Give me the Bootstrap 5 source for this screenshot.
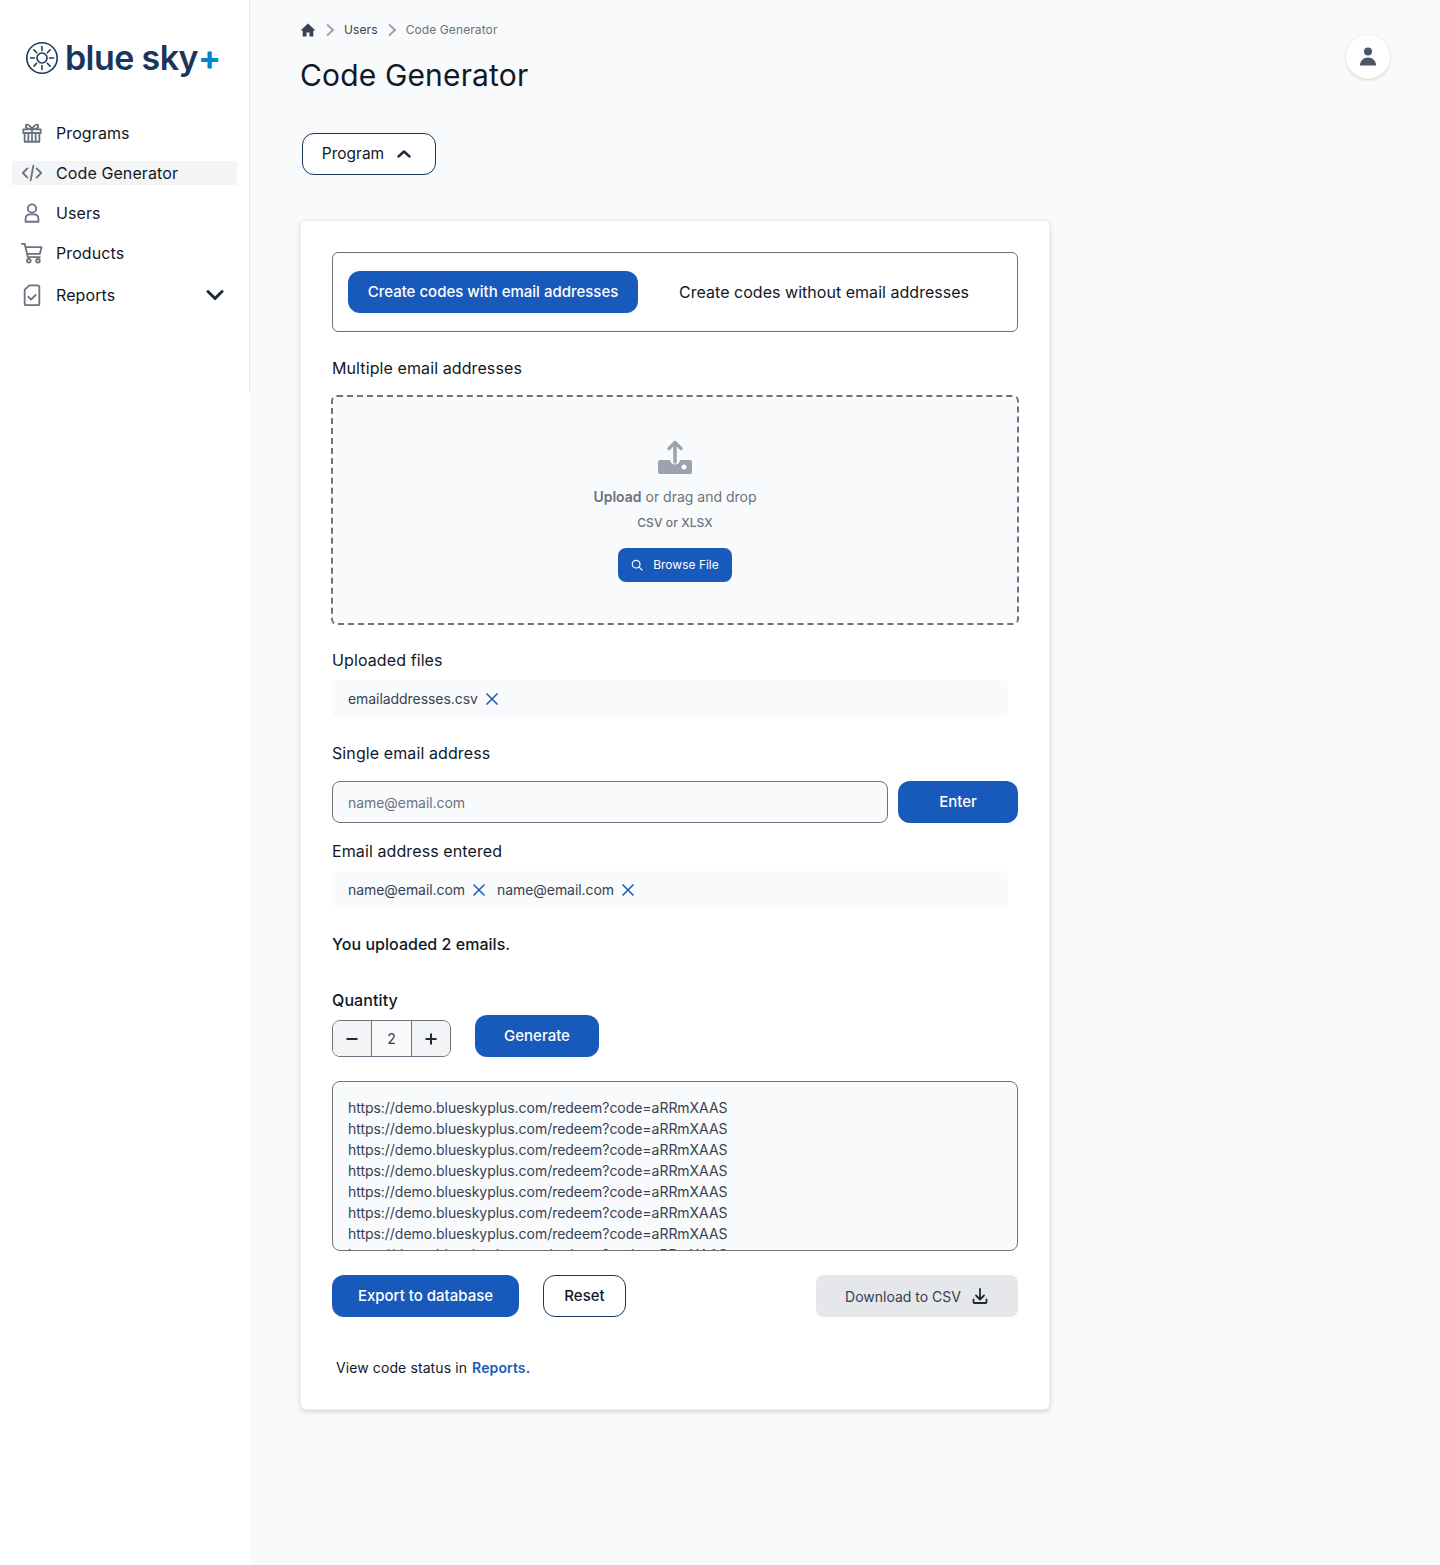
<!DOCTYPE html>
<html lang="en">
<head>
    <meta charset="UTF-8">
    <meta name="viewport" content="width=device-width, initial-scale=1.0">
    <title>Code Generator</title>
    <link href="https://cdn.jsdelivr.net/npm/bootstrap@5.3.0/dist/css/bootstrap.min.css" rel="stylesheet">
    <style>
        body { font-family: Inter, "Liberation Sans", sans-serif; background: #f9fafb; color: #111827; min-height: 1565px; letter-spacing: .1px; }
        .side-panel { width: 250px; flex: none; background: #fff; min-height: 1565px; padding: 0 13px 0 12px; position: relative; }
        .side-rule { position: absolute; top: 0; right: 0; width: 1px; height: 392px; background: #e5e7eb; }
        .brand { height: 121px; padding: 40px 0 0 13px; }
        .brand-logo { margin: 1px 7px 0 0; flex: none; }
        .brand-name { font-weight: 600; font-size: 34px; line-height: 36px; color: #1a365d; letter-spacing: -.6px; white-space: nowrap; margin-left: -1px; }
        .brand-name b { color: #0284d4; font-weight: 700; }
        .side-link { height: 24px; margin-bottom: 16px; color: #111827; font-size: 16px; text-decoration: none; padding-left: 9px; }
        .side-link.current { background: #f3f4f6; }
        .side-link svg.ico { width: 22px; height: 22px; margin-right: 13px; flex: none; }
        .side-link.last { margin-top: 18px; }
        .main-area { padding: 20px 50px 0 50px; flex: 1; }
        .crumbs { font-size: 12px; line-height: 20px; color: #374151; }
        .crumbs .here { color: #6b7280; }
        .crumb-sep { margin: 0 9px; }
        .page-title { font-size: 30px; line-height: 36px; font-weight: 400; margin: 17px 0 0; letter-spacing: .15px; }
        .avatar-btn { width: 44px; height: 44px; border-radius: 50%; background: #fff; box-shadow: 0 1px 3px rgba(0,0,0,.18); margin-top: 15px; }
        .btn-program { width: 134px; height: 42px; border: 1px solid #1a365d; border-radius: 12px; background: #fff; font-size: 15.5px; color: #111827; margin: 40px 0 45px 2px; padding: 0 5px 0 0; gap: 13px; }
        .form-card { width: 750px; height: 1190px; border: 1px solid #eceef1; border-radius: 6px; background: #fff; padding: 31px; box-shadow: 0 2px 5px rgba(0,0,0,.15); }
        .mode-switch { height: 80px; border: 1px solid #6b7280; border-radius: 6px; padding: 0 15px; }
        .btn-blue { background: #185abc; color: #fff; border: 0; border-radius: 12px; height: 42px; font-size: 15px; font-weight: 500; padding: 0; }
        .btn-blue:hover { background: #185abc; color: #fff; }
        .mode-off { font-size: 16px; margin-left: 41px; color: #111827; letter-spacing: .03px; }
        .field-label { font-size: 16px; line-height: 24px; margin: 0; }
        .summary-text { letter-spacing: .03px; }
        .drop-zone { width: 688px; height: 230px; background: #f9fafb; border: 2px dashed #6b7280; border-radius: 6px; margin: 15px 0 0 -1px; padding-top: 43px; }
        .drop-title { font-size: 14px; color: #6b7280; line-height: 20px; margin-top: 13px; letter-spacing: 0; }
        .drop-hint { font-size: 12px; font-weight: 500; color: #6b7280; line-height: 16px; margin-top: 8px; }
        .btn-browse { width: 114px; height: 34px; border-radius: 8px; font-size: 12px; margin-top: 17px; gap: 10px; }
        .tag-box { width: 676px; height: 37px; background: #f9fafb; border-radius: 6px; padding: 0 16px; font-size: 14px; color: #374151; margin-top: 8px; letter-spacing: -.06px; }
        .tag-box svg { width: 14px; height: 14px; margin-left: 7px; }
        .tag-next { margin-left: 11px; }
        .mail-input { width: 556px; height: 42px; background: #f9fafb; border: 1px solid #6b7280; border-radius: 8px; padding: 0 15px; font-size: 14px; color: #6b7280; letter-spacing: -.06px; }
        .mail-input::placeholder { color: #6b7280; }
        .stepper { width: 119px; height: 37px; border: 1px solid #6b7280; border-radius: 8px; overflow: hidden; margin-top: 8px; }
        .stepper > div { flex: 1; }
        .stepper .step-btn { background: #f3f4f6; }
        .stepper .step-val { background: #f9fafb; border-left: 1px solid #6b7280; border-right: 1px solid #6b7280; font-size: 14px; color: #374151; }
        .code-box { height: 170px; background: #f9fafb; border: 1px solid #6b7280; border-radius: 8px; padding: 15px 15px 0; font-size: 14px; line-height: 21px; color: #374151; overflow: hidden; margin-top: 24px; letter-spacing: -.04px; }
        .btn-reset { width: 83px; height: 42px; border: 1px solid #1a365d; border-radius: 12px; background: #fff; font-size: 15px; font-weight: 500; color: #111827; }
        .btn-csv { width: 202px; height: 42px; border: 0; border-radius: 8px; background: #e5e7eb; font-size: 14px; color: #374151; gap: 10px; }
        .status-line { font-size: 14px; margin: 41px 0 0 4px; line-height: 20px; }
        .status-line a { color: #185abc; font-weight: 600; text-decoration: none; margin-left: 1px; }
    </style>
</head>
<body>
<div class="d-flex">
    <!-- sidebar -->
    <nav class="side-panel">
        <div class="side-rule"></div>
        <div class="brand d-flex align-items-start">
            <svg class="brand-logo" width="34" height="34" viewBox="0 0 34 34" fill="none" stroke="#1a365d">
                <circle cx="17" cy="17" r="15.2" stroke-width="1.6"/>
                <circle cx="17" cy="17" r="5" stroke-width="1.6"/>
                <path d="M17 5.500v4M17 24.500v4M5.500 17h4M24.500 17h4M8.900 8.900l2.800 2.800M22.300 22.300l2.800 2.800M25.100 8.900l-2.800 2.800M11.700 22.300l-2.800 2.800" stroke-width="1.500" stroke-linecap="round"/>
            </svg>
            <span class="brand-name">blue sky<b>+</b></span>
        </div>
        <a href="#" class="side-link d-flex align-items-center">
            <svg class="ico" viewBox="0 0 24 24" fill="none" stroke="#6b7280" stroke-width="2" stroke-linejoin="round"><path d="M2.500 8h19v4h-19zM4 12v9.500h16V12M12 8v13.500M8 12v9.500M16 12v9.500M12 8C10 3 6 1.800 5.200 4 4.500 6.300 8 8 12 8ZM12 8c2-5 6-6.200 6.800-4 .7 2.300-2.800 4-6.800 4Z"/></svg>
            Programs
        </a>
        <a href="#" class="side-link current d-flex align-items-center">
            <svg class="ico" viewBox="0 0 24 24" fill="none" stroke="#6b7280" stroke-width="2" stroke-linecap="round" stroke-linejoin="round"><path d="M7 7l-5 5 5 5M17 7l5 5-5 5M13.500 4l-3 16"/></svg>
            Code Generator
        </a>
        <a href="#" class="side-link d-flex align-items-center">
            <svg class="ico" viewBox="0 0 24 24" fill="none" stroke="#6b7280" stroke-width="2" stroke-linejoin="round"><circle cx="12" cy="7" r="4.500"/><path d="M5 21.500v-3c0-3 2-5 5-5h4c3 0 5 2 5 5v3Z"/></svg>
            Users
        </a>
        <a href="#" class="side-link d-flex align-items-center">
            <svg class="ico" viewBox="0 0 24 24" fill="none" stroke="#6b7280" stroke-width="2" stroke-linecap="round" stroke-linejoin="round"><path d="M1 2h3l3.500 14.500h13M5 5.500h17.500l-2 7.500H7"/><circle cx="8.500" cy="20.500" r="2"/><circle cx="18.500" cy="20.500" r="2"/></svg>
            Products
        </a>
        <a href="#" class="side-link last d-flex align-items-center">
            <svg class="ico" viewBox="0 0 24 24" fill="none" stroke="#6b7280" stroke-width="2" stroke-linecap="round" stroke-linejoin="round"><path d="M9 1.500h9a2 2 0 0 1 2 2V22a1 1 0 0 1-1 1H5a1 1 0 0 1-1-1V6.500ZM8 14l3 3 5-5"/></svg>
            Reports
            <svg class="ms-auto" style="margin-right:13px" width="18" height="12" viewBox="0 0 18 12" fill="none" stroke="#1f2937" stroke-width="3" stroke-linecap="round" stroke-linejoin="round"><path d="M2 2.500l7 7 7-7"/></svg>
        </a>
    </nav>

    <main class="main-area">
        <div class="d-flex justify-content-between">
            <div>
                <div class="crumbs d-flex align-items-center">
                    <svg width="16" height="16" viewBox="0 0 16 16" fill="#374151"><path d="M8 1.500 .5 8.500h2.200V14.500h3.800v-4h3v4h3.800V8.500h2.200Z"/></svg>
                    <svg class="crumb-sep" width="10" height="14" viewBox="0 0 10 14" fill="none" stroke="#9ca3af" stroke-width="2"><path d="M2 1.500 8 7l-6 5.500"/></svg>
                    <span>Users</span>
                    <svg class="crumb-sep" width="10" height="14" viewBox="0 0 10 14" fill="none" stroke="#9ca3af" stroke-width="2"><path d="M2 1.500 8 7l-6 5.500"/></svg>
                    <span class="here">Code Generator</span>
                </div>
                <h1 class="page-title">Code Generator</h1>
            </div>
            <div class="avatar-btn d-flex align-items-center justify-content-center">
                <svg width="18" height="20" viewBox="0 0 18 20" fill="#4b5563"><circle cx="9" cy="4.500" r="4"/><path d="M1 18.500c0-5 3.500-8 8-8s8 3 8 8Z"/></svg>
            </div>
        </div>

        <button class="btn-program d-flex align-items-center justify-content-center" type="button">
            Program
            <svg width="14" height="10" viewBox="0 0 14 10" fill="none" stroke="#1f2937" stroke-width="2.400" stroke-linecap="round" stroke-linejoin="round"><path d="M1.500 7.500 7 2.500l5.500 5"/></svg>
        </button>

        <div class="card form-card">
            <div class="mode-switch d-flex align-items-center">
                <button class="btn-blue" style="width:290px" type="button">Create codes with email addresses</button>
                <span class="mode-off">Create codes without email addresses</span>
            </div>

            <p class="field-label" style="margin-top:24px">Multiple email addresses</p>
            <div class="drop-zone d-flex flex-column align-items-center">
                <svg width="34" height="34" viewBox="0 0 34 34" fill="#9ca3af"><path d="M2 20h10v0a5 4.500 0 0 0 10 0v0h10a2 2 0 0 1 2 2v10a2 2 0 0 1-2 2H2a2 2 0 0 1-2-2V22a2 2 0 0 1 2-2Z"/><circle cx="26" cy="27" r="2.500" fill="#f9fafb"/><path d="M17 3v19" fill="none" stroke="#9ca3af" stroke-width="3.500" stroke-linecap="round"/><path d="M11 8.500 17 2.500 23 8.500" fill="none" stroke="#9ca3af" stroke-width="3.200" stroke-linecap="round" stroke-linejoin="round"/></svg>
                <div class="drop-title"><span class="fw-semibold">Upload</span> or drag and drop</div>
                <div class="drop-hint">CSV or XLSX</div>
                <button class="btn-blue btn-browse d-flex align-items-center justify-content-center" type="button">
                    <svg width="12" height="12" viewBox="0 0 14 14" fill="none" stroke="#fff" stroke-width="1.400" stroke-linecap="round"><circle cx="6" cy="6" r="4.500"/><path d="M9.500 9.500 13 13"/></svg>
                    <span class="fw-normal">Browse File</span>
                </button>
            </div>

            <p class="field-label" style="margin-top:23px">Uploaded files</p>
            <div class="tag-box d-flex align-items-center">
                emailaddresses.csv
                <svg viewBox="0 0 14 14" fill="none" stroke="#185abc" stroke-width="1.500"><path d="M1.500 1.500l11 11M12.500 1.500l-11 11"/></svg>
            </div>

            <p class="field-label" style="margin-top:24px">Single email address</p>
            <div class="d-flex gap-2" style="margin-top:16px">
                <input class="mail-input" type="text" placeholder="name@email.com">
                <button class="btn-blue ms-auto" style="width:120px" type="button">Enter</button>
            </div>

            <p class="field-label" style="margin-top:16px">Email address entered</p>
            <div class="tag-box d-flex align-items-center">
                name@email.com
                <svg viewBox="0 0 14 14" fill="none" stroke="#185abc" stroke-width="1.500"><path d="M1.500 1.500l11 11M12.500 1.500l-11 11"/></svg>
                <span class="tag-next">name@email.com</span>
                <svg viewBox="0 0 14 14" fill="none" stroke="#185abc" stroke-width="1.500"><path d="M1.500 1.500l11 11M12.500 1.500l-11 11"/></svg>
            </div>

            <p class="field-label fw-medium summary-text" style="margin-top:24px">You uploaded 2 emails.</p>

            <div class="d-flex align-items-end" style="margin-top:32px">
                <div>
                    <p class="field-label fw-medium">Quantity</p>
                    <div class="stepper d-flex">
                        <div class="step-btn d-flex align-items-center justify-content-center">
                            <svg width="14" height="14" viewBox="0 0 14 14" stroke="#1f2937" stroke-width="2"><path d="M1.500 7h11"/></svg>
                        </div>
                        <div class="step-val d-flex align-items-center justify-content-center">2</div>
                        <div class="step-btn d-flex align-items-center justify-content-center">
                            <svg width="14" height="14" viewBox="0 0 14 14" stroke="#1f2937" stroke-width="2"><path d="M1.500 7h11M7 1.500v11"/></svg>
                        </div>
                    </div>
                </div>
                <button class="btn-blue" style="width:124px;margin-left:24px" type="button">Generate</button>
            </div>

            <div class="code-box">
                https://demo.blueskyplus.com/redeem?code=aRRmXAAS<br>
                https://demo.blueskyplus.com/redeem?code=aRRmXAAS<br>
                https://demo.blueskyplus.com/redeem?code=aRRmXAAS<br>
                https://demo.blueskyplus.com/redeem?code=aRRmXAAS<br>
                https://demo.blueskyplus.com/redeem?code=aRRmXAAS<br>
                https://demo.blueskyplus.com/redeem?code=aRRmXAAS<br>
                https://demo.blueskyplus.com/redeem?code=aRRmXAAS<br>
                https://demo.blueskyplus.com/redeem?code=aRRmXAAS
            </div>

            <div class="d-flex align-items-center" style="margin-top:24px">
                <button class="btn-blue" style="width:187px" type="button">Export to database</button>
                <button class="btn-reset" style="margin-left:24px" type="button">Reset</button>
                <button class="btn-csv ms-auto d-flex align-items-center justify-content-center" type="button">
                    Download to CSV
                    <svg width="18" height="18" viewBox="0 0 18 18" fill="none" stroke="#1f2937" stroke-width="1.800" stroke-linecap="round" stroke-linejoin="round"><path d="M9 2v10M5 8.500l4 4 4-4M2.500 12.500v2.500a1 1 0 0 0 1 1h11a1 1 0 0 0 1-1v-2.500"/></svg>
                </button>
            </div>

            <p class="status-line">View code status in <a href="#">Reports.</a></p>
        </div>
    </main>
</div>
<script src="https://cdn.jsdelivr.net/npm/bootstrap@5.3.0/dist/js/bootstrap.bundle.min.js"></script>
</body>
</html>
